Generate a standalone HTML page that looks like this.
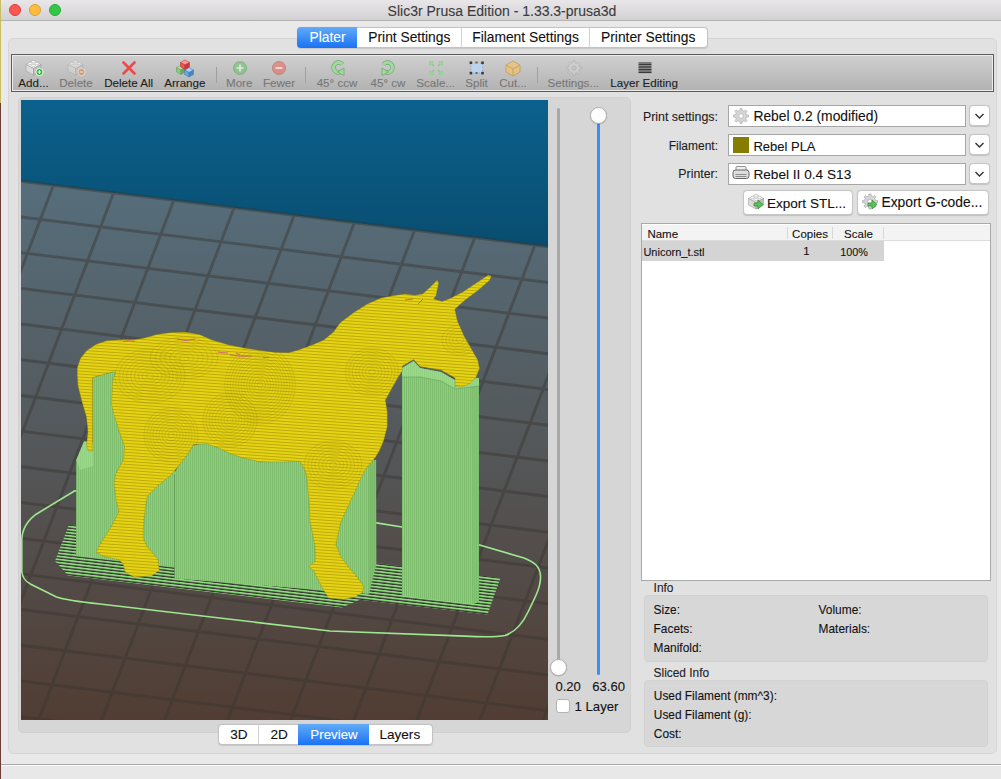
<!DOCTYPE html>
<html><head><meta charset="utf-8"><title>Slic3r Prusa Edition</title>
<style>
html,body{margin:0;padding:0;}
body{width:1001px;height:779px;overflow:hidden;position:relative;background:#e9e9e9;font-family:"Liberation Sans",sans-serif;}
.a{position:absolute;box-sizing:border-box;}
.t{position:absolute;white-space:nowrap;line-height:1;-webkit-text-stroke:0.1px currentColor;}
.cv{position:absolute;left:21px;top:100px;display:block;}
</style></head><body>
<!-- desktop strip -->
<div class="a" style="left:0;top:0;width:1px;height:103px;background:#c8bd62"></div>
<div class="a" style="left:0;top:103px;width:1px;height:676px;background:#6b3f35"></div>
<!-- title bar -->
<div class="a" style="left:1px;top:0;width:1000px;height:21px;background:linear-gradient(#e8e6e8,#d3d1d3);border-bottom:1px solid #b3b3b3;border-top-left-radius:5px"></div>
<div class="a" style="left:9px;top:4px;width:12px;height:12px;border-radius:50%;background:#fc5753;border:1px solid #df3d37"></div>
<div class="a" style="left:29px;top:4px;width:12px;height:12px;border-radius:50%;background:#fdbc40;border:1px solid #de9f2a"></div>
<div class="a" style="left:49px;top:4px;width:12px;height:12px;border-radius:50%;background:#33c748;border:1px solid #27aa35"></div>
<!-- outer tab panel -->
<div class="a" style="left:8px;top:38px;width:989px;height:716px;background:#e1e1e1;border:1px solid #d6d6d6;border-radius:5px"></div>
<!-- tabs -->
<div class="a" style="left:297px;top:27px;width:411px;height:21px;background:#fff;border:1px solid #c3c3c3;border-radius:4px;box-shadow:0 0.5px 1px rgba(0,0,0,0.12)"></div>
<div class="a" style="left:297px;top:27px;width:60px;height:21px;background:linear-gradient(#62abf8,#1a72f5);border-radius:4px 0 0 4px"></div>
<div class="a" style="left:461px;top:28px;width:1px;height:19px;background:#d0d0d0"></div>
<div class="a" style="left:589px;top:28px;width:1px;height:19px;background:#d0d0d0"></div>
<!-- toolbar -->
<div class="a" style="left:11px;top:54px;width:983px;height:38px;border:1px solid #5b5b5b;background:linear-gradient(#d0d0d0,#b2b2b2);box-shadow:inset 0 0 0 1px #ececec"></div>
<div class="a" style="left:216px;top:67px;width:1px;height:16px;background:#a0a0a0"></div>
<div class="a" style="left:305px;top:67px;width:1px;height:16px;background:#a0a0a0"></div>
<div class="a" style="left:537px;top:67px;width:1px;height:16px;background:#a0a0a0"></div>
<!-- toolbar icons -->
<svg class="a" style="left:0;top:54px" width="700" height="30" viewBox="0 54 700 30">
 <!-- add -->
 <g opacity="1.0"><path d="M26.0,64.5 L33.5,60.5 L41.0,64.5 L33.5,68.5Z" fill="#f4f4f4" stroke="#a0a0a0" stroke-width="0.6"/><path d="M26.0,64.5 L33.5,68.5 L33.5,75.0 L26.0,71.0Z" fill="#dcdcdc" stroke="#a0a0a0" stroke-width="0.6"/><path d="M33.5,68.5 L41.0,64.5 L41.0,71.0 L33.5,75.0Z" fill="#c2c2c2" stroke="#999" stroke-width="0.6"/><g fill="#fafafa" stroke="#a8a8a8" stroke-width="0.5"><ellipse cx="30.0" cy="63.5" rx="2" ry="1.2"/><ellipse cx="37.0" cy="63.5" rx="2" ry="1.2"/><ellipse cx="33.5" cy="61.7" rx="2" ry="1.2"/><ellipse cx="33.5" cy="65.5" rx="2" ry="1.2"/></g><circle cx="39.5" cy="72" r="3.6" fill="#2fb13c" stroke="#fff" stroke-width="0.9"/><path d="M37.6,72h3.8M39.5,70.1v3.8" stroke="#fff" stroke-width="1.1"/></g>
 <g opacity="0.55"><path d="M68.0,64.5 L75.5,60.5 L83.0,64.5 L75.5,68.5Z" fill="#f4f4f4" stroke="#a0a0a0" stroke-width="0.6"/><path d="M68.0,64.5 L75.5,68.5 L75.5,75.0 L68.0,71.0Z" fill="#dcdcdc" stroke="#a0a0a0" stroke-width="0.6"/><path d="M75.5,68.5 L83.0,64.5 L83.0,71.0 L75.5,75.0Z" fill="#c2c2c2" stroke="#999" stroke-width="0.6"/><g fill="#fafafa" stroke="#a8a8a8" stroke-width="0.5"><ellipse cx="72.0" cy="63.5" rx="2" ry="1.2"/><ellipse cx="79.0" cy="63.5" rx="2" ry="1.2"/><ellipse cx="75.5" cy="61.7" rx="2" ry="1.2"/><ellipse cx="75.5" cy="65.5" rx="2" ry="1.2"/></g><circle cx="81.5" cy="72" r="3.6" fill="#e07b2a" stroke="#fff" stroke-width="0.9"/><path d="M79.6,72h3.8" stroke="#fff" stroke-width="1.1"/></g>
 <path d="M123.5,62.5 L134.5,73.5 M134.5,62.5 L123.5,73.5" stroke="#f04848" stroke-width="2.6" stroke-linecap="round"/>
 <g><g stroke="#5a9a50" stroke-width="0.5"><path d="M176.5,67.5 L181,65 L185.5,67.5 L181,70Z" fill="#b8e6a8"/><path d="M176.5,67.5 L181,70 L181,74.5 L176.5,72Z" fill="#8ccc7c"/><path d="M181,70 L185.5,67.5 L185.5,72 L181,74.5Z" fill="#6aaa5a"/></g><g stroke="#3e78b8" stroke-width="0.5"><path d="M184.5,70.0 L189,67.5 L193.5,70.0 L189,72.5Z" fill="#a8d0f4"/><path d="M184.5,70.0 L189,72.5 L189,77.0 L184.5,74.5Z" fill="#6aa6e0"/><path d="M189,72.5 L193.5,70.0 L193.5,74.5 L189,77.0Z" fill="#4a86c0"/></g><g stroke="#b83030" stroke-width="0.5"><path d="M180.5,62.5 L185,60 L189.5,62.5 L185,65Z" fill="#ff9a9a"/><path d="M180.5,62.5 L185,65 L185,69.5 L180.5,67Z" fill="#ee5555"/><path d="M185,65 L189.5,62.5 L189.5,67 L185,69.5Z" fill="#c83a3a"/></g></g>
 <g opacity="0.6"><circle cx="240" cy="68" r="6.5" fill="#6cc46c" stroke="#4a9a4a" stroke-width="0.8"/><path d="M236.5,68h7M240,64.5v7" stroke="#fff" stroke-width="1.6"/></g>
 <g opacity="0.6"><circle cx="279" cy="68" r="6.5" fill="#ec6b5e" stroke="#b84a40" stroke-width="0.8"/><path d="M275.5,68h7" stroke="#fff" stroke-width="1.6"/></g>
 <g><path d="M342.5,64.5 A5,5 0 1 0 341.5,71.5" stroke="#6fa86f" stroke-width="4.4" fill="none"/><path d="M342.5,64.5 A5,5 0 1 0 341.5,71.5" stroke="#a3d9a0" stroke-width="3" fill="none"/><path d="M337.5,72 l6.5,-4 l0,7.5z" fill="#a3d9a0" stroke="#6fa86f" stroke-width="0.8"/></g>
 <g><path d="M383.5,64.5 A5,5 0 1 1 384.5,71.5" stroke="#6fa86f" stroke-width="4.4" fill="none"/><path d="M383.5,64.5 A5,5 0 1 1 384.5,71.5" stroke="#a3d9a0" stroke-width="3" fill="none"/><path d="M388.5,72 l-6.5,-4 l0,7.5z" fill="#a3d9a0" stroke="#6fa86f" stroke-width="0.8"/></g>
 <g stroke="#8ccc8a" stroke-width="1.6" fill="#a3d9a0"><path d="M430,62 l4,4 M442,62 l-4,4 M430,74 l4,-4 M442,74 l-4,-4"/><path d="M429.5,61.5h4l-4,4z M442.5,61.5h-4l4,4z M429.5,74.5h4l-4,-4z M442.5,74.5h-4l4,-4z" stroke-width="0.6"/></g>
 <g><rect x="471" y="63" width="11.5" height="10" fill="#bcd3ef" stroke="#7f9cc4" stroke-width="0.6" stroke-dasharray="1.5,1.5"/><g fill="#3a3a3a"><rect x="469.6" y="61.5" width="2.6" height="2.6"/><rect x="481.2" y="61.5" width="2.6" height="2.6"/><rect x="469.6" y="71.8" width="2.6" height="2.6"/><rect x="481.2" y="71.8" width="2.6" height="2.6"/><rect x="475.5" y="61.5" width="2" height="2" fill="#666"/><rect x="475.5" y="72" width="2" height="2" fill="#666"/></g></g>
 <g opacity="0.7"><path d="M506,65 L513,61 L520,65 L520,72 L513,76 L506,72Z" fill="#f2c46a" stroke="#c08a30" stroke-width="0.8"/><path d="M506,65 L513,69 L520,65 M513,69 L513,76" stroke="#c08a30" stroke-width="0.8" fill="none"/></g>
 <g opacity="0.55"><path d="M579.37,66.82 L581.43,66.97 L581.43,69.03 L579.37,69.18 L578.63,70.97 L579.98,72.53 L578.53,73.98 L576.97,72.63 L575.18,73.37 L575.03,75.43 L572.97,75.43 L572.82,73.37 L571.03,72.63 L569.47,73.98 L568.02,72.53 L569.37,70.97 L568.63,69.18 L566.57,69.03 L566.57,66.97 L568.63,66.82 L569.37,65.03 L568.02,63.47 L569.47,62.02 L571.03,63.37 L572.82,62.63 L572.97,60.57 L575.03,60.57 L575.18,62.63 L576.97,63.37 L578.53,62.02 L579.98,63.47 L578.63,65.03Z M571.80,68.00 a2.20,2.20 0 1 0 4.40,0 a2.20,2.20 0 1 0 -4.40,0Z" fill="#d4d4d4" fill-rule="evenodd" stroke="#999" stroke-width="0.6"/></g>
 <g stroke="#1a1a1a" stroke-width="0.9"><path d="M638.5,63h13M638.5,64.6h13M638.5,66.2h13M638.5,67.8h13M638.5,69.4h13M638.5,71h13M638.5,72.6h13"/></g>
</svg>
<!-- inner left panel -->
<div class="a" style="left:18px;top:97px;width:613px;height:636px;background:#d6d6d6;border:1px solid #d0d0d0;border-radius:5px"></div>
<svg class="cv" width="527" height="620" viewBox="21 100 527 620">
<defs>
<linearGradient id="sky" x1="0" y1="100" x2="0" y2="720" gradientUnits="userSpaceOnUse"><stop offset="0" stop-color="#0b618e"/><stop offset="1" stop-color="#000c0c"/></linearGradient>
<linearGradient id="bedg" x1="0" y1="182" x2="0" y2="720" gradientUnits="userSpaceOnUse"><stop offset="0" stop-color="#566e7c"/><stop offset="0.5" stop-color="#545759"/><stop offset="1" stop-color="#513d33"/></linearGradient>
<pattern id="stripes" width="6" height="3.1" patternUnits="userSpaceOnUse" patternTransform="skewY(6.6)"><rect width="6" height="3.1" fill="#2a2c26" fill-opacity="0.8"/><rect width="6" height="1.8" y="0" fill="#8fd680"/></pattern>
<pattern id="ytex" width="4" height="3" patternUnits="userSpaceOnUse" patternTransform="skewY(4)"><rect width="4" height="3" fill="#e6d414"/><rect width="4" height="1" y="2" fill="#7a6a00" fill-opacity="0.4"/></pattern>
<pattern id="gtex" width="2" height="4" patternUnits="userSpaceOnUse"><rect width="2" height="4" fill="#8ed07e"/><rect width="1" height="4" fill="#7cbc6c"/></pattern>
<clipPath id="uclip"><polygon points="77.3,367.7 80.4,358.5 86.5,350.8 95.8,344.6 106.5,340.8 119.3,339.8 133.7,339.8 144.5,338.0 157.0,334.4 171.4,332.6 185.8,332.2 199.2,334.4 212.0,340.0 228.0,344.8 243.9,348.0 259.9,350.4 275.9,352.4 288.7,352.8 299.9,349.6 312.7,344.8 323.9,340.0 333.5,332.0 340.2,322.7 353.8,312.6 367.4,304.1 381.0,298.1 394.5,295.6 404.7,293.9 414.9,295.2 422.6,293.9 428.5,288.8 437.0,280.3 438.7,282.8 436.1,295.6 433.6,299.0 442.1,301.5 448.9,299.0 462.5,292.2 477.8,282.0 488.0,275.2 491.3,276.0 489.6,280.3 477.8,290.5 464.2,300.7 454.8,309.2 457.4,321.0 464.2,336.3 471.0,348.2 477.8,360.1 479.5,368.6 476.1,377.1 469.3,383.9 460.8,387.3 455.7,385.6 455.0,388.0 455.0,378.0 441.0,370.0 420.0,366.6 413.6,359.6 402.4,366.0 402.1,371.2 398.2,377.0 391.8,388.5 385.4,400.0 387.3,412.3 387.3,426.4 383.7,440.5 379.5,450.4 375.3,457.5 366.8,467.4 361.2,477.2 355.4,490.7 340.7,522.4 335.9,544.4 340.7,556.6 348.0,566.3 357.0,577.0 363.5,586.0 362.5,592.5 355.4,596.8 343.2,599.3 328.5,598.0 321.2,585.9 313.9,571.2 309.0,566.3 315.1,561.5 315.1,546.8 310.2,522.4 309.0,500.5 306.6,476.1 304.3,469.0 300.0,461.3 281.9,462.0 260.9,462.0 242.7,457.8 230.1,453.6 219.0,448.0 206.4,443.8 193.8,444.5 188.2,453.6 178.4,466.2 170.0,476.0 158.1,485.4 147.2,496.3 144.0,518.1 142.9,537.7 147.2,546.5 158.1,559.6 159.2,570.5 151.6,575.9 134.1,577.0 125.4,572.6 123.2,564.0 118.9,559.6 103.6,556.3 96.0,552.0 101.4,542.1 111.2,526.8 118.9,511.6 116.2,500.0 114.2,484.6 115.5,474.4 123.8,459.0 124.5,446.0 119.4,432.0 114.2,415.0 111.6,405.0 112.6,381.0 115.8,372.2 112.6,371.9 92.7,377.6 92.7,450.8 88.0,450.8 86.5,444.6 88.0,432.3 86.5,417.0 81.9,401.5 78.0,386.0 77.3,375.0"/></clipPath>
</defs>
<rect x="21" y="100" width="527" height="620" fill="url(#sky)"/>
<polygon points="-247.5,147.9 775.7,275.0 515.7,956.6 -507.5,829.5" fill="url(#bedg)"/>
<path d="M-307.7,140.5L-567.7,822.0M-247.5,147.9L-507.5,829.5M-187.4,155.4L-447.4,837.0M-127.2,162.9L-387.2,844.5M-67.0,170.4L-327.0,851.9M-6.8,177.8L-266.8,859.4M53.4,185.3L-206.6,866.9M113.6,192.8L-146.4,874.4M173.8,200.2L-86.2,881.8M234.0,207.7L-26.0,889.3M294.2,215.2L34.2,896.8M354.3,222.7L94.3,904.3M414.5,230.2L154.5,911.7M474.7,237.6L214.7,919.2M534.9,245.1L274.9,926.7M595.1,252.6L335.1,934.2M655.3,260.1L395.3,941.6M715.5,267.5L455.5,949.1M775.7,275.0L515.7,956.6M-307.7,140.5L835.9,282.5M-320.7,174.5L822.9,316.6M-333.7,208.6L809.9,350.6M-346.7,242.7L796.9,384.7M-359.7,276.8L783.9,418.8M-372.7,310.9L770.9,452.9M-385.7,344.9L757.9,487.0M-398.7,379.0L744.9,521.0M-411.7,413.1L731.9,555.1M-424.7,447.2L718.9,589.2M-437.7,481.2L705.9,623.3M-450.7,515.3L692.9,657.4M-463.7,549.4L679.9,691.4M-476.7,583.5L666.9,725.5M-489.7,617.6L653.9,759.6M-502.7,651.6L640.9,793.7M-515.7,685.7L627.9,827.8M-528.7,719.8L614.9,861.8M-541.7,753.9L601.9,895.9M-554.7,788.0L588.9,930.0" stroke="#3a3530" stroke-opacity="0.45" stroke-width="2.9" fill="none"/>
<path d="M74.8,490.8 L36.2,514.2 C27,521 22,530 21.8,540 L21.8,571.7 C22.5,578 25,581 30.8,584.2 L56,596.8 C65,600 80,602 100,604 L330,631 L464.7,636.1 C480,637 494,637.5 505,635.5 C515,632 522,625 528,612 C536,596 541,586 540.5,576 C540,566 534,562 524,558 L478.8,544.7 L402,527 L376.4,522.9 Z" stroke="#9ee88f" stroke-width="1.6" fill="none"/>
<polygon points="68.8,525.0 376.0,563.0 500.6,578.0 487.5,614.5 359.7,599.7 342.0,607.5 68.0,575.5 55.0,561.0" fill="url(#stripes)"/>
<polygon points="76.2,460.0 84.1,441.2 93.0,443.0 92.7,377.6 112.6,371.9 118.0,372.0 140.0,400.0 175.0,470.0 175.0,567.5 76.0,556.0" fill="url(#gtex)"/>
<polygon points="175.0,472.0 190.0,446.0 206.0,443.0 300.0,455.0 376.0,460.0 376.3,563.5 368.7,594.0 174.4,578.4" fill="url(#gtex)"/>
<polygon points="368.7,461.0 376.3,460.0 376.3,563.5 368.7,594.0" fill="#74b464" fill-opacity="0.5"/>
<polygon points="402.0,368.0 413.6,361.0 420.0,368.0 441.0,372.0 455.0,380.0 479.0,378.0 479.0,602.0 473.0,604.0 402.0,596.0" fill="url(#gtex)"/>
<polygon points="471.0,377.0 479.0,378.0 479.0,602.0 473.0,604.0" fill="#7dbf6e" fill-opacity="0.6"/>
<polygon points="402,368 413.6,361 420,368 441,372 455,380 479,378 479,386 455,389 441,381 420,377 402,377" fill="#a6e296" fill-opacity="0.55"/>
<path d="M402,377 L420,377 L441,381 L455,389 L479,386" stroke="#3f6a38" stroke-opacity="0.35" stroke-width="0.8" fill="none"/>
<polygon points="76.2,460 84.1,441.2 93,443 93,466 80,470" fill="#a6e296" fill-opacity="0.5"/>
<path d="M174.6,474L174.6,578" stroke="#3f6a38" stroke-opacity="0.5" stroke-width="0.8"/>
<polygon points="77.3,367.7 80.4,358.5 86.5,350.8 95.8,344.6 106.5,340.8 119.3,339.8 133.7,339.8 144.5,338.0 157.0,334.4 171.4,332.6 185.8,332.2 199.2,334.4 212.0,340.0 228.0,344.8 243.9,348.0 259.9,350.4 275.9,352.4 288.7,352.8 299.9,349.6 312.7,344.8 323.9,340.0 333.5,332.0 340.2,322.7 353.8,312.6 367.4,304.1 381.0,298.1 394.5,295.6 404.7,293.9 414.9,295.2 422.6,293.9 428.5,288.8 437.0,280.3 438.7,282.8 436.1,295.6 433.6,299.0 442.1,301.5 448.9,299.0 462.5,292.2 477.8,282.0 488.0,275.2 491.3,276.0 489.6,280.3 477.8,290.5 464.2,300.7 454.8,309.2 457.4,321.0 464.2,336.3 471.0,348.2 477.8,360.1 479.5,368.6 476.1,377.1 469.3,383.9 460.8,387.3 455.7,385.6 455.0,388.0 455.0,378.0 441.0,370.0 420.0,366.6 413.6,359.6 402.4,366.0 402.1,371.2 398.2,377.0 391.8,388.5 385.4,400.0 387.3,412.3 387.3,426.4 383.7,440.5 379.5,450.4 375.3,457.5 366.8,467.4 361.2,477.2 355.4,490.7 340.7,522.4 335.9,544.4 340.7,556.6 348.0,566.3 357.0,577.0 363.5,586.0 362.5,592.5 355.4,596.8 343.2,599.3 328.5,598.0 321.2,585.9 313.9,571.2 309.0,566.3 315.1,561.5 315.1,546.8 310.2,522.4 309.0,500.5 306.6,476.1 304.3,469.0 300.0,461.3 281.9,462.0 260.9,462.0 242.7,457.8 230.1,453.6 219.0,448.0 206.4,443.8 193.8,444.5 188.2,453.6 178.4,466.2 170.0,476.0 158.1,485.4 147.2,496.3 144.0,518.1 142.9,537.7 147.2,546.5 158.1,559.6 159.2,570.5 151.6,575.9 134.1,577.0 125.4,572.6 123.2,564.0 118.9,559.6 103.6,556.3 96.0,552.0 101.4,542.1 111.2,526.8 118.9,511.6 116.2,500.0 114.2,484.6 115.5,474.4 123.8,459.0 124.5,446.0 119.4,432.0 114.2,415.0 111.6,405.0 112.6,381.0 115.8,372.2 112.6,371.9 92.7,377.6 92.7,450.8 88.0,450.8 86.5,444.6 88.0,432.3 86.5,417.0 81.9,401.5 78.0,386.0 77.3,375.0" fill="url(#ytex)" stroke="#8a7800" stroke-opacity="0.45" stroke-width="0.7"/>
<g clip-path="url(#uclip)" fill="none" stroke="#8a7800" stroke-opacity="0.22" stroke-width="0.9"><ellipse cx="150" cy="376" rx="3.9" ry="3.0"/><ellipse cx="150" cy="376" rx="7.8" ry="6.0"/><ellipse cx="150" cy="376" rx="11.7" ry="9.0"/><ellipse cx="150" cy="376" rx="15.6" ry="12.0"/><ellipse cx="150" cy="376" rx="19.5" ry="15.0"/><ellipse cx="150" cy="376" rx="23.4" ry="18.0"/><ellipse cx="150" cy="376" rx="27.3" ry="21.0"/><ellipse cx="150" cy="376" rx="31.2" ry="24.0"/><ellipse cx="150" cy="376" rx="35.1" ry="27.0"/><ellipse cx="184" cy="358" rx="4.8" ry="3.0"/><ellipse cx="184" cy="358" rx="9.6" ry="6.0"/><ellipse cx="184" cy="358" rx="14.4" ry="9.0"/><ellipse cx="184" cy="358" rx="19.2" ry="12.0"/><ellipse cx="184" cy="358" rx="24.0" ry="15.0"/><ellipse cx="184" cy="358" rx="28.8" ry="18.0"/><ellipse cx="184" cy="358" rx="33.6" ry="21.0"/><ellipse cx="171" cy="435" rx="3.0" ry="3.0"/><ellipse cx="171" cy="435" rx="6.0" ry="6.0"/><ellipse cx="171" cy="435" rx="9.0" ry="9.0"/><ellipse cx="171" cy="435" rx="12.0" ry="12.0"/><ellipse cx="171" cy="435" rx="15.0" ry="15.0"/><ellipse cx="171" cy="435" rx="18.0" ry="18.0"/><ellipse cx="171" cy="435" rx="21.0" ry="21.0"/><ellipse cx="171" cy="435" rx="24.0" ry="24.0"/><ellipse cx="171" cy="435" rx="27.0" ry="27.0"/><ellipse cx="260" cy="385" rx="2.7" ry="3.0"/><ellipse cx="260" cy="385" rx="5.4" ry="6.0"/><ellipse cx="260" cy="385" rx="8.1" ry="9.0"/><ellipse cx="260" cy="385" rx="10.8" ry="12.0"/><ellipse cx="260" cy="385" rx="13.5" ry="15.0"/><ellipse cx="260" cy="385" rx="16.2" ry="18.0"/><ellipse cx="260" cy="385" rx="18.9" ry="21.0"/><ellipse cx="260" cy="385" rx="21.6" ry="24.0"/><ellipse cx="260" cy="385" rx="24.3" ry="27.0"/><ellipse cx="260" cy="385" rx="27.0" ry="30.0"/><ellipse cx="260" cy="385" rx="29.7" ry="33.0"/><ellipse cx="260" cy="385" rx="32.4" ry="36.0"/><ellipse cx="260" cy="385" rx="35.1" ry="39.0"/><ellipse cx="333" cy="465" rx="3.6" ry="3.0"/><ellipse cx="333" cy="465" rx="7.2" ry="6.0"/><ellipse cx="333" cy="465" rx="10.8" ry="9.0"/><ellipse cx="333" cy="465" rx="14.4" ry="12.0"/><ellipse cx="333" cy="465" rx="18.0" ry="15.0"/><ellipse cx="333" cy="465" rx="21.6" ry="18.0"/><ellipse cx="333" cy="465" rx="25.2" ry="21.0"/><ellipse cx="333" cy="465" rx="28.8" ry="24.0"/><ellipse cx="372" cy="372" rx="3.3" ry="3.0"/><ellipse cx="372" cy="372" rx="6.6" ry="6.0"/><ellipse cx="372" cy="372" rx="9.9" ry="9.0"/><ellipse cx="372" cy="372" rx="13.2" ry="12.0"/><ellipse cx="372" cy="372" rx="16.5" ry="15.0"/><ellipse cx="372" cy="372" rx="19.8" ry="18.0"/><ellipse cx="372" cy="372" rx="23.1" ry="21.0"/><ellipse cx="372" cy="372" rx="26.4" ry="24.0"/><ellipse cx="430" cy="411" rx="3.0" ry="3.0"/><ellipse cx="430" cy="411" rx="6.0" ry="6.0"/><ellipse cx="430" cy="411" rx="9.0" ry="9.0"/><ellipse cx="430" cy="411" rx="12.0" ry="12.0"/><ellipse cx="430" cy="411" rx="15.0" ry="15.0"/><ellipse cx="430" cy="411" rx="18.0" ry="18.0"/><ellipse cx="430" cy="411" rx="21.0" ry="21.0"/><ellipse cx="460" cy="340" rx="3.6" ry="3.0"/><ellipse cx="460" cy="340" rx="7.2" ry="6.0"/><ellipse cx="460" cy="340" rx="10.8" ry="9.0"/><ellipse cx="460" cy="340" rx="14.4" ry="12.0"/><ellipse cx="460" cy="340" rx="18.0" ry="15.0"/><ellipse cx="230" cy="420" rx="3.0" ry="3.0"/><ellipse cx="230" cy="420" rx="6.0" ry="6.0"/><ellipse cx="230" cy="420" rx="9.0" ry="9.0"/><ellipse cx="230" cy="420" rx="12.0" ry="12.0"/><ellipse cx="230" cy="420" rx="15.0" ry="15.0"/><ellipse cx="230" cy="420" rx="18.0" ry="18.0"/><ellipse cx="230" cy="420" rx="21.0" ry="21.0"/><ellipse cx="230" cy="420" rx="24.0" ry="24.0"/><ellipse cx="230" cy="420" rx="27.0" ry="27.0"/></g>
<g fill="none" stroke="#d0508a" stroke-width="1" stroke-opacity="0.85"><path d="M123,341.5q6,-1.5 12,0"/><path d="M177,339q9,3 18,0"/><path d="M218,352q5,1 10,1"/><path d="M230,355q10,2 22,1M236,353l4,2"/><path d="M263,357.5h6"/><path d="M405,300l8,-1"/><path d="M418,304l5,-5"/></g>
</svg>
<!-- sliders -->
<div class="a" style="left:557px;top:108px;width:3px;height:560px;background:#a9a9a9;border-radius:1.5px"></div>
<div class="a" style="left:597px;top:115px;width:3px;height:560px;background:#3b8ef7;border-radius:1.5px"></div>
<div class="a" style="left:590px;top:107px;width:17px;height:17px;border-radius:50%;background:#fff;border:1px solid #b0b0b0;box-shadow:0 0.5px 1px rgba(0,0,0,0.2)"></div>
<div class="a" style="left:550px;top:659px;width:17px;height:17px;border-radius:50%;background:#fff;border:1px solid #b0b0b0;box-shadow:0 0.5px 1px rgba(0,0,0,0.2)"></div>
<div class="a" style="left:556px;top:699px;width:14px;height:14px;border-radius:3px;background:#fff;border:1px solid #b3b3b3"></div>
<!-- view buttons -->
<div class="a" style="left:218px;top:724px;width:215px;height:21px;background:#fff;border:1px solid #c3c3c3;border-radius:4px;box-shadow:0 0.5px 1px rgba(0,0,0,0.12)"></div>
<div class="a" style="left:258px;top:725px;width:1px;height:19px;background:#d0d0d0"></div>
<div class="a" style="left:298px;top:724px;width:71px;height:21px;background:linear-gradient(#62abf8,#1a72f5)"></div>
<!-- right: combos -->
<div class="a" style="left:728px;top:105px;width:238px;height:22px;background:#fff;border:1px solid #a6a6a6"></div>
<div class="a" style="left:728px;top:134px;width:238px;height:22px;background:#fff;border:1px solid #a6a6a6"></div>
<div class="a" style="left:728px;top:163px;width:238px;height:22px;background:#fff;border:1px solid #a6a6a6"></div>
<div class="a" style="left:969px;top:105px;width:21px;height:21px;background:#fff;border:1px solid #c6c6c6;border-radius:4px;box-shadow:0 0.5px 1px rgba(0,0,0,0.15)"></div>
<div class="a" style="left:969px;top:134px;width:21px;height:21px;background:#fff;border:1px solid #c6c6c6;border-radius:4px;box-shadow:0 0.5px 1px rgba(0,0,0,0.15)"></div>
<div class="a" style="left:969px;top:163px;width:21px;height:21px;background:#fff;border:1px solid #c6c6c6;border-radius:4px;box-shadow:0 0.5px 1px rgba(0,0,0,0.15)"></div>
<svg class="a" style="left:969px;top:105px" width="21" height="80" viewBox="0 0 21 80"><g stroke="#333" stroke-width="1.4" fill="none"><path d="M6.5,9l4,4l4,-4"/><path d="M6.5,38l4,4l4,-4"/><path d="M6.5,67l4,4l4,-4"/></g></svg>
<!-- combo icons -->
<svg class="a" style="left:732px;top:106px" width="18" height="78" viewBox="0 0 18 78">
 <path d="M14.47,8.80 L16.53,8.96 L16.53,11.04 L14.47,11.20 L13.72,13.02 L15.06,14.59 L13.59,16.06 L12.02,14.72 L10.20,15.47 L10.04,17.53 L7.96,17.53 L7.80,15.47 L5.98,14.72 L4.41,16.06 L2.94,14.59 L4.28,13.02 L3.53,11.20 L1.47,11.04 L1.47,8.96 L3.53,8.80 L4.28,6.98 L2.94,5.41 L4.41,3.94 L5.98,5.28 L7.80,4.53 L7.96,2.47 L10.04,2.47 L10.20,4.53 L12.02,5.28 L13.59,3.94 L15.06,5.41 L13.72,6.98Z M6.70,10.00 a2.30,2.30 0 1 0 4.60,0 a2.30,2.30 0 1 0 -4.60,0Z" fill="#d6d6d6" fill-rule="evenodd" stroke="#a6a6a6" stroke-width="0.6"/>
 <rect x="1" y="31" width="16" height="16" fill="#857c00"/>
 <g transform="translate(0,58)"><rect x="4" y="2.5" width="10" height="5" rx="1" fill="#f0f0f0" stroke="#777" stroke-width="0.8"/><rect x="1" y="6" width="16" height="8.5" rx="2.5" fill="#dedede" stroke="#555" stroke-width="0.9"/><path d="M3.5,10.5h11M3.5,12.5h11" stroke="#777" stroke-width="0.8"/></g>
</svg>
<!-- export buttons -->
<div class="a" style="left:743px;top:190px;width:110px;height:25px;background:#fff;border:1px solid #c6c6c6;border-radius:4px;box-shadow:0 0.5px 1px rgba(0,0,0,0.15)"></div>
<div class="a" style="left:857px;top:190px;width:132px;height:25px;background:#fff;border:1px solid #c6c6c6;border-radius:4px;box-shadow:0 0.5px 1px rgba(0,0,0,0.15)"></div>
<svg class="a" style="left:0;top:0" width="1001" height="230" viewBox="0 0 1001 230">
 <g transform="translate(756,194.5) scale(1.0)"><path d="M-7.5,4 L0,0 L7.5,4 L0,8Z" fill="#f4f4f4" stroke="#a0a0a0" stroke-width="0.6"/><path d="M-7.5,4 L0,8 L0,14.5 L-7.5,10.5Z" fill="#dcdcdc" stroke="#a0a0a0" stroke-width="0.6"/><path d="M0,8 L7.5,4 L7.5,10.5 L0,14.5Z" fill="#c2c2c2" stroke="#999" stroke-width="0.6"/><g fill="#fafafa" stroke="#a8a8a8" stroke-width="0.5"><ellipse cx="-3.5" cy="3" rx="2" ry="1.2"/><ellipse cx="3.5" cy="3" rx="2" ry="1.2"/><ellipse cx="0" cy="1.2" rx="2" ry="1.2"/><ellipse cx="0" cy="5" rx="2" ry="1.2"/></g></g><path d="M754,203h4v-3l5,4.5l-5,4.5v-3h-4z" fill="#5cc05c" stroke="#2f8a2f" stroke-width="0.7"/>
 <path d="M875.47,200.30 L877.53,200.46 L877.53,202.54 L875.47,202.70 L874.72,204.52 L876.06,206.09 L874.59,207.56 L873.02,206.22 L871.20,206.97 L871.04,209.03 L868.96,209.03 L868.80,206.97 L866.98,206.22 L865.41,207.56 L863.94,206.09 L865.28,204.52 L864.53,202.70 L862.47,202.54 L862.47,200.46 L864.53,200.30 L865.28,198.48 L863.94,196.91 L865.41,195.44 L866.98,196.78 L868.80,196.03 L868.96,193.97 L871.04,193.97 L871.20,196.03 L873.02,196.78 L874.59,195.44 L876.06,196.91 L874.72,198.48Z M867.80,201.50 a2.20,2.20 0 1 0 4.40,0 a2.20,2.20 0 1 0 -4.40,0Z" fill="#d6d6d6" fill-rule="evenodd" stroke="#a0a0a0" stroke-width="0.6"/><path d="M868,203h4v-3l5,4.5l-5,4.5v-3h-4z" fill="#5cc05c" stroke="#2f8a2f" stroke-width="0.7"/>
</svg>
<!-- object list -->
<div class="a" style="left:641px;top:223px;width:350px;height:358px;background:#fff;border:1px solid #a9a9a9"></div>
<div class="a" style="left:642px;top:225px;width:348px;height:16px;background:#f3f3f3;border-bottom:1px solid #dcdcdc"></div>
<div class="a" style="left:642px;top:241px;width:242px;height:20px;background:#d4d4d4"></div>
<div class="a" style="left:787px;top:227px;width:1px;height:12px;background:#d8d8d8"></div>
<div class="a" style="left:832px;top:227px;width:1px;height:12px;background:#d8d8d8"></div>
<div class="a" style="left:883px;top:227px;width:1px;height:12px;background:#d8d8d8"></div>
<!-- info boxes -->
<div class="a" style="left:644px;top:595px;width:344px;height:67px;background:#d7d7d7;border:1px solid #d2d2d2;border-radius:4px"></div>
<div class="a" style="left:644px;top:680px;width:344px;height:67px;background:#d7d7d7;border:1px solid #d2d2d2;border-radius:4px"></div>
<!-- status bar -->
<div class="a" style="left:1px;top:764px;width:1000px;height:15px;background:#e8e8e8;border-top:1px solid #aaaaaa;box-shadow:inset 0 1px 0 #fafafa"></div>
<div class="t" style="left:352px;width:300px;top:3.65px;font-size:14px;color:#3b3b3b;text-align:center;">Slic3r Prusa Edition - 1.33.3-prusa3d</div>
<div class="t" style="left:177.5px;width:300px;top:30.72px;font-size:13.8px;color:#ffffff;text-align:center;">Plater</div>
<div class="t" style="left:259.3px;width:300px;top:30.72px;font-size:13.8px;color:#111;text-align:center;">Print Settings</div>
<div class="t" style="left:375.5px;width:300px;top:30.72px;font-size:13.8px;color:#111;text-align:center;">Filament Settings</div>
<div class="t" style="left:498.20000000000005px;width:300px;top:30.72px;font-size:13.8px;color:#111;text-align:center;">Printer Settings</div>
<div class="t" style="left:-116.5px;width:300px;top:77.18px;font-size:11.6px;color:#1d1d1d;text-align:center;">Add...</div>
<div class="t" style="left:-74px;width:300px;top:77.18px;font-size:11.6px;color:#777;text-align:center;">Delete</div>
<div class="t" style="left:-21.30000000000001px;width:300px;top:77.18px;font-size:11.6px;color:#1d1d1d;text-align:center;">Delete All</div>
<div class="t" style="left:34.80000000000001px;width:300px;top:77.18px;font-size:11.6px;color:#1d1d1d;text-align:center;">Arrange</div>
<div class="t" style="left:89.19999999999999px;width:300px;top:77.18px;font-size:11.6px;color:#777;text-align:center;">More</div>
<div class="t" style="left:129px;width:300px;top:77.18px;font-size:11.6px;color:#777;text-align:center;">Fewer</div>
<div class="t" style="left:187px;width:300px;top:77.18px;font-size:11.6px;color:#777;text-align:center;">45° ccw</div>
<div class="t" style="left:238px;width:300px;top:77.18px;font-size:11.6px;color:#777;text-align:center;">45° cw</div>
<div class="t" style="left:285.7px;width:300px;top:77.18px;font-size:11.6px;color:#777;text-align:center;">Scale...</div>
<div class="t" style="left:326.5px;width:300px;top:77.18px;font-size:11.6px;color:#777;text-align:center;">Split</div>
<div class="t" style="left:363px;width:300px;top:77.18px;font-size:11.6px;color:#777;text-align:center;">Cut...</div>
<div class="t" style="left:423.29999999999995px;width:300px;top:77.18px;font-size:11.6px;color:#777;text-align:center;">Settings...</div>
<div class="t" style="left:494.20000000000005px;width:300px;top:77.18px;font-size:11.6px;color:#1d1d1d;text-align:center;">Layer Editing</div>
<div class="t" style="right:283px;top:110.70px;font-size:12.4px;color:#1d1d1d;text-align:right;">Print settings:</div>
<div class="t" style="right:283px;top:139.54px;font-size:12.0px;color:#1d1d1d;text-align:right;">Filament:</div>
<div class="t" style="right:283px;top:167.99px;font-size:12.3px;color:#1d1d1d;text-align:right;">Printer:</div>
<div class="t" style="left:753.4px;top:110.08px;font-size:13.85px;color:#111;">Rebel 0.2 (modified)</div>
<div class="t" style="left:753.4px;top:139.90px;font-size:13.0px;color:#111;">Rebel PLA</div>
<div class="t" style="left:753.4px;top:168.05px;font-size:13.65px;color:#111;">Rebel II 0.4 S13</div>
<div class="t" style="left:656.5px;width:300px;top:196.53px;font-size:13.55px;color:#111;text-align:center;">Export STL...</div>
<div class="t" style="left:781.85px;width:300px;top:196.28px;font-size:13.85px;color:#111;text-align:center;">Export G-code...</div>
<div class="t" style="left:647.4px;top:229.27px;font-size:11.5px;color:#111;">Name</div>
<div class="t" style="left:660px;width:300px;top:229.27px;font-size:11.5px;color:#111;text-align:center;">Copies</div>
<div class="t" style="left:708.5px;width:300px;top:229.27px;font-size:11.5px;color:#111;text-align:center;">Scale</div>
<div class="t" style="left:643.4px;top:246.69px;font-size:11.0px;color:#111;">Unicorn_t.stl</div>
<div class="t" style="left:656.4px;width:300px;top:246.43px;font-size:11.3px;color:#111;text-align:center;">1</div>
<div class="t" style="left:704px;width:300px;top:246.86px;font-size:10.8px;color:#111;text-align:center;">100%</div>
<div class="t" style="left:653.6px;top:582.93px;font-size:11.9px;color:#222;">Info</div>
<div class="t" style="left:653.6px;top:604.73px;font-size:11.9px;color:#111;">Size:</div>
<div class="t" style="left:653.6px;top:623.93px;font-size:11.9px;color:#111;">Facets:</div>
<div class="t" style="left:653.6px;top:642.63px;font-size:11.9px;color:#111;">Manifold:</div>
<div class="t" style="left:818.6px;top:604.73px;font-size:11.9px;color:#111;">Volume:</div>
<div class="t" style="left:818.6px;top:623.93px;font-size:11.9px;color:#111;">Materials:</div>
<div class="t" style="left:653.6px;top:667.93px;font-size:11.9px;color:#222;">Sliced Info</div>
<div class="t" style="left:653.8px;top:690.93px;font-size:11.9px;color:#111;">Used Filament (mm^3):</div>
<div class="t" style="left:653.8px;top:709.93px;font-size:11.9px;color:#111;">Used Filament (g):</div>
<div class="t" style="left:653.8px;top:728.93px;font-size:11.9px;color:#111;">Cost:</div>
<div class="t" style="left:555.4px;top:680.11px;font-size:13.1px;color:#111;">0.20</div>
<div class="t" style="left:592.2px;top:680.11px;font-size:13.1px;color:#111;">63.60</div>
<div class="t" style="left:574.5px;top:700.33px;font-size:13.2px;color:#111;">1 Layer</div>
<div class="t" style="left:89px;width:300px;top:727.79px;font-size:13.6px;color:#111;text-align:center;">3D</div>
<div class="t" style="left:129.10000000000002px;width:300px;top:727.79px;font-size:13.6px;color:#111;text-align:center;">2D</div>
<div class="t" style="left:184px;width:300px;top:728.04px;font-size:13.3px;color:#fff;text-align:center;">Preview</div>
<div class="t" style="left:249.8px;width:300px;top:727.79px;font-size:13.6px;color:#111;text-align:center;">Layers</div>
</body></html>
